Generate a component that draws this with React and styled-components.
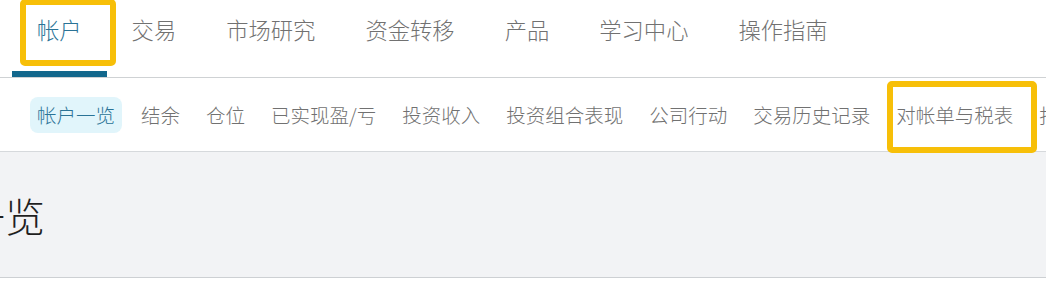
import React from 'react';
import styled, { createGlobalStyle } from 'styled-components';

const mainTabs = ['帐户', '交易', '市场研究', '资金转移', '产品', '学习中心', '操作指南'];
const subTabs = [
  '帐户一览',
  '结余',
  '仓位',
  '已实现盈/亏',
  '投资收入',
  '投资组合表现',
  '公司行动',
  '交易历史记录',
  '对帐单与税表',
  '报告',
];

function App() {
  return (
    <Page>
      <GlobalStyle />
      <TopNav>
        {mainTabs.map((t, i) => (
          <TopTab key={t} active={i === 0}>
            {t}
          </TopTab>
        ))}
      </TopNav>
      <SubNav>
        {subTabs.map((t, i) => (
          <SubTab key={t} active={i === 0}>
            {t}
          </SubTab>
        ))}
      </SubNav>
      <Content>
        <Heading>帐户一览</Heading>
      </Content>
      <Highlight style={{ left: 20, top: -1, width: 96, height: 67 }} />
      <Highlight style={{ left: 887, top: 81, width: 150, height: 72 }} />
    </Page>
  );
}

const GlobalStyle = createGlobalStyle`
  html, body {
    margin: 0;
    padding: 0;
    background: #fff;
  }
  body {
    font-family: "Noto Sans CJK SC", "Microsoft YaHei", sans-serif;
    overflow: hidden;
  }
  * {
    box-sizing: border-box;
  }
`;

const Page = styled.div`
  position: relative;
  width: 1046px;
  height: 285px;
  overflow: hidden;
  background: #fff;
`;

const TopNav = styled.div`
  display: flex;
  height: 78px;
  padding-left: 12px;
  border-bottom: 1px solid #cfd2d4;
`;

const TopTab = styled.div`
  height: 77px;
  padding: 0 25px;
  line-height: 59px;
  font-size: 22.3px;
  font-weight: 300;
  white-space: nowrap;
  color: ${(p) => (p.active ? '#2a7396' : '#717171')};
  border-bottom: 6px solid ${(p) => (p.active ? '#12678c' : 'transparent')};
`;

const SubNav = styled.div`
  display: flex;
  align-items: center;
  gap: 12px;
  height: 74px;
  padding-left: 30px;
  border-bottom: 1px solid #d6d9dc;
  white-space: nowrap;
  overflow: hidden;
`;

const SubTab = styled.div`
  flex-shrink: 0;
  height: 36px;
  padding: 0 7px;
  line-height: 35px;
  font-size: 19.5px;
  font-weight: 300;
  border-radius: 8px;
  color: ${(p) => (p.active ? '#2a7396' : '#717171')};
  background: ${(p) => (p.active ? '#e1f5fb' : 'transparent')};
`;

const Content = styled.div`
  display: flex;
  align-items: center;
  height: 126px;
  background: #f2f3f5;
  border-bottom: 1px solid #cdd0d3;
  overflow: hidden;
`;

const Heading = styled.h1`
  margin: 0 0 0 -115px;
  font-size: 40px;
  font-weight: 300;
  color: #1f1f1f;
  white-space: nowrap;
`;

const Highlight = styled.div`
  position: absolute;
  border: 6px solid #f7bf08;
  border-radius: 5px;
  pointer-events: none;
`;

export default App;
